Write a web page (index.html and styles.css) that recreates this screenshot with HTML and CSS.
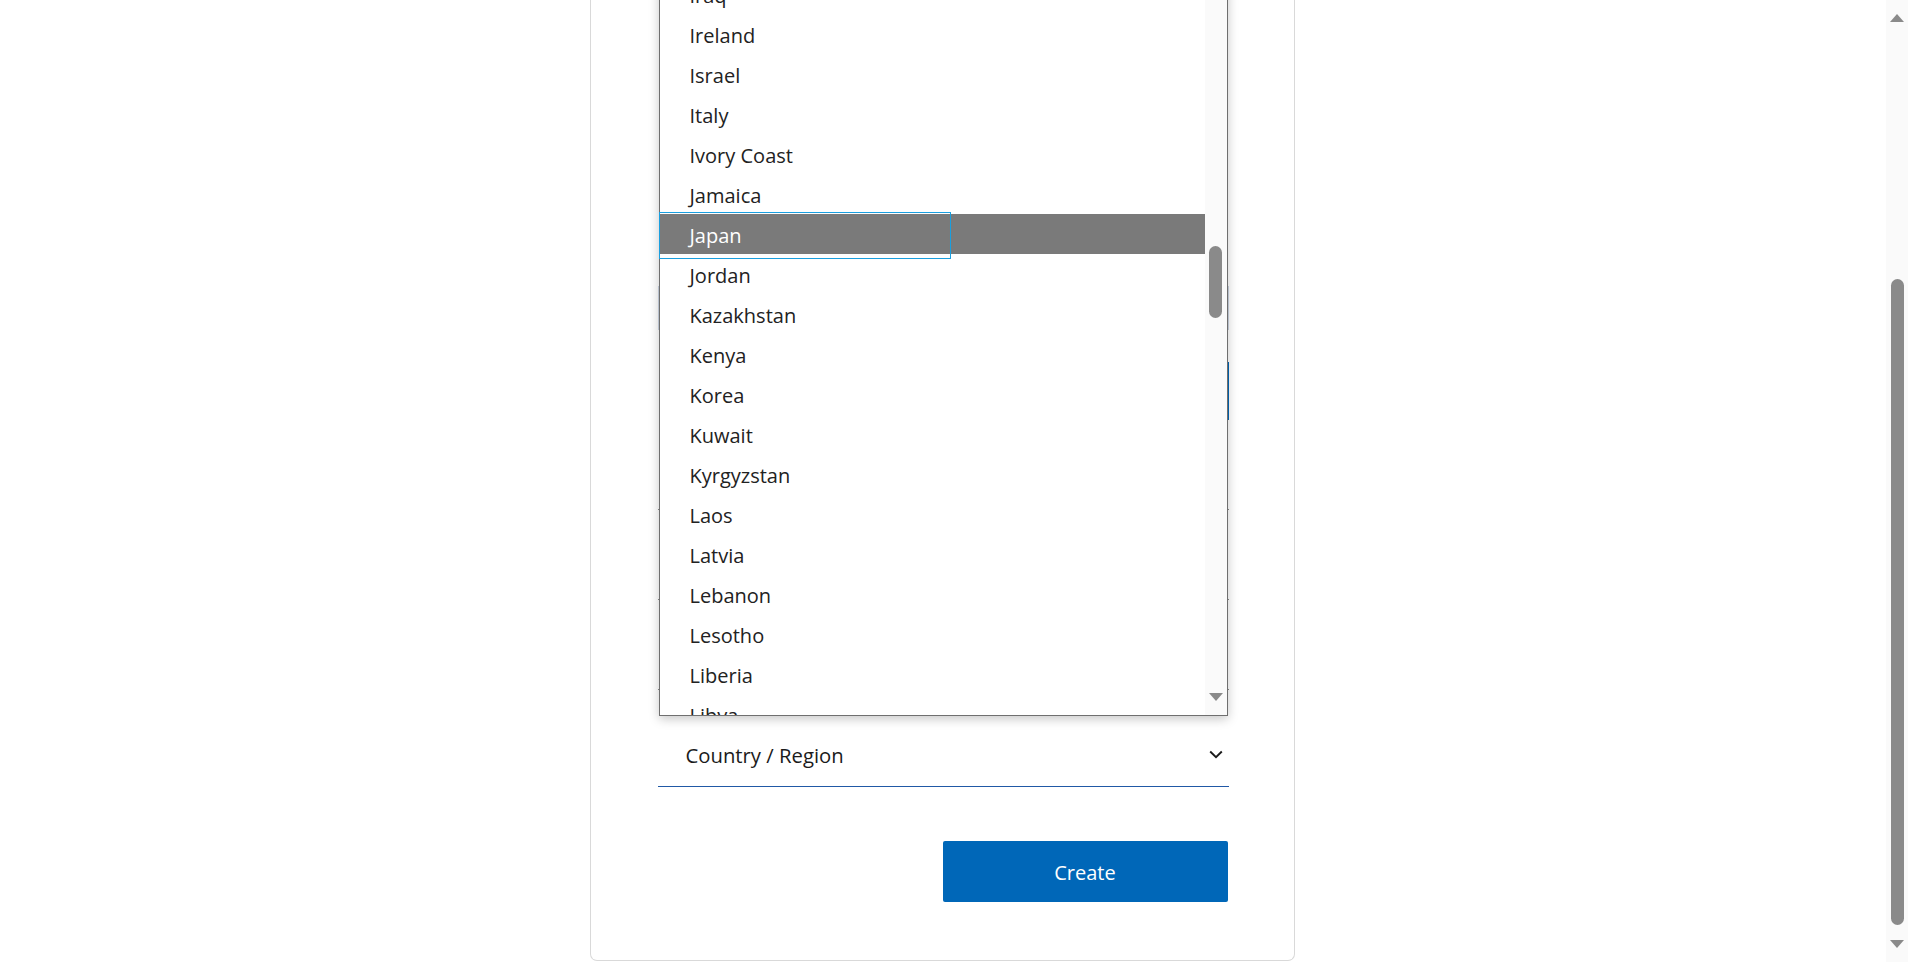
FILE: index.html
```html
<!DOCTYPE html>
<html lang="en">
<head>
<meta charset="utf-8">
<title>Create account</title>
<link rel="stylesheet" href="styles.css">
</head>
<body>
<div class="window">
  <main class="page">
    <section class="card">
      <div class="top-space"></div>
      <div class="box box-a"></div>
      <div class="box box-b"></div>
      <div class="line-row"></div>
      <div class="line-row"></div>
      <div class="line-row"></div>
      <div class="select">
        <span class="select-text">Country / Region</span>
        <svg class="chevron" width="14" height="9" viewBox="0 0 14 9"><polyline points="1.2,1.5 7,7.2 12.8,1.5" fill="none" stroke="#1b1b1b" stroke-width="1.9"/></svg>
      </div>
      <div class="actions">
        <button class="create" type="button">Create</button>
      </div>

      <div class="listbox">
        <ul class="options">
          <li>Iraq</li>
          <li>Ireland</li>
          <li>Israel</li>
          <li>Italy</li>
          <li>Ivory Coast</li>
          <li>Jamaica</li>
          <li class="selected">Japan</li>
          <li>Jordan</li>
          <li>Kazakhstan</li>
          <li>Kenya</li>
          <li>Korea</li>
          <li>Kuwait</li>
          <li>Kyrgyzstan</li>
          <li>Laos</li>
          <li>Latvia</li>
          <li>Lebanon</li>
          <li>Lesotho</li>
          <li>Liberia</li>
          <li>Libya</li>
        </ul>
        <div class="lb-track">
          <div class="lb-thumb"></div>
          <div class="grow"></div>
          <svg class="lb-down" width="14" height="8" viewBox="0 0 14 8"><polygon points="0,0 14,0 7,8" fill="#8a8a8a"/></svg>
        </div>
        <div class="focus-ring"></div>
      </div>
    </section>
  </main>
  <div class="vscroll">
    <svg class="arrow-up" width="14" height="8" viewBox="0 0 14 8"><polygon points="0,8 14,8 7,0" fill="#8a8a8a"/></svg>
    <div class="thumb"></div>
    <div class="grow"></div>
    <svg class="arrow-down" width="14" height="8" viewBox="0 0 14 8"><polygon points="0,0 14,0 7,8" fill="#8a8a8a"/></svg>
  </div>
</div>
</body>
</html>
```
FILE: styles.css
```css
* { box-sizing: border-box; }
html, body { margin: 0; padding: 0; }
body {
  font-family: "Open Sans", "Noto Sans", sans-serif;
  color: #1b1b1b;
  background: #fff;
  overflow: hidden;
}
.window { display: flex; height: 962px; }
.page { flex: 1; display: flex; justify-content: center; padding-right: 2px; }

.card {
  position: relative;
  width: 705px;
  height: 961px;
  border: 1px solid #d9d9d9;
  border-top: none;
  border-radius: 0 0 7px 7px;
  padding: 0 65px 0 67px;
  display: flex;
  flex-direction: column;
}
.top-space { height: 286px; flex: none; }
.box { flex: none; }
.box-a { height: 44px; border: 1px solid #cdd6e4; }
.box-b { height: 58px; margin-top: 32px; margin-left: 2px; border: 1px solid #0067b8; }
.line-row { height: 90px; flex: none; border-bottom: 1px solid #8a8a8a; }

.select {
  flex: none;
  height: 97px;
  padding: 34px 6px 0 28px;
  display: flex;
  align-items: center;
  justify-content: space-between;
  border-bottom: 1px solid #2159a6;
}
.select-text { font-size: 20.3px; line-height: 28px; color: #1b1b1b; }
.chevron { display: block; margin-top: -2px; }

.actions { display: flex; justify-content: flex-end; margin-top: 54px; padding-right: 1px; }
.create {
  width: 285px;
  height: 61px;
  border: none;
  border-radius: 2px;
  background: #0067b8;
  color: #fff;
  font-family: "Open Sans", "Noto Sans", sans-serif;
  font-size: 20px;
  padding-top: 2px;
}

.listbox {
  position: absolute;
  left: 68px;
  top: -27px;
  width: 569px;
  height: 743px;
  border: 1px solid #6f6f6f;
  background: #fff;
  box-shadow: 0 3px 10px rgba(0, 0, 0, 0.22);
  display: flex;
}
.options {
  list-style: none;
  margin: 0;
  padding: 0;
  width: 545px;
  height: 741px;
  overflow: hidden;
}
.options li {
  height: 40px;
  line-height: 44px;
  padding-left: 30px;
  font-size: 20px;
  color: #222;
  white-space: nowrap;
}
.options li.selected { background: #7a7a7a; color: #fff; }
.lb-track {
  width: 22px;
  height: 741px;
  background: #fafafa;
  display: flex;
  flex-direction: column;
  align-items: center;
}
.lb-thumb {
  margin-top: 272px;
  width: 13px;
  height: 72px;
  border-radius: 7px;
  background: #8a8a8a;
  flex: none;
}
.grow { flex: 1; }
.lb-down { display: block; margin-bottom: 14px; flex: none; }
.focus-ring {
  position: absolute;
  left: -1px;
  top: 238px;
  width: 292px;
  height: 47px;
  border: 1px solid #1a9fdf;
}

.vscroll {
  width: 22px;
  flex: none;
  background: #fafafa;
  display: flex;
  flex-direction: column;
  align-items: center;
}
.arrow-up { display: block; margin-top: 14px; flex: none; }
.thumb {
  margin-top: 257px;
  width: 13px;
  height: 646px;
  border-radius: 7px;
  background: #8a8a8a;
  flex: none;
}
.arrow-down { display: block; margin-bottom: 14px; flex: none; }
```
